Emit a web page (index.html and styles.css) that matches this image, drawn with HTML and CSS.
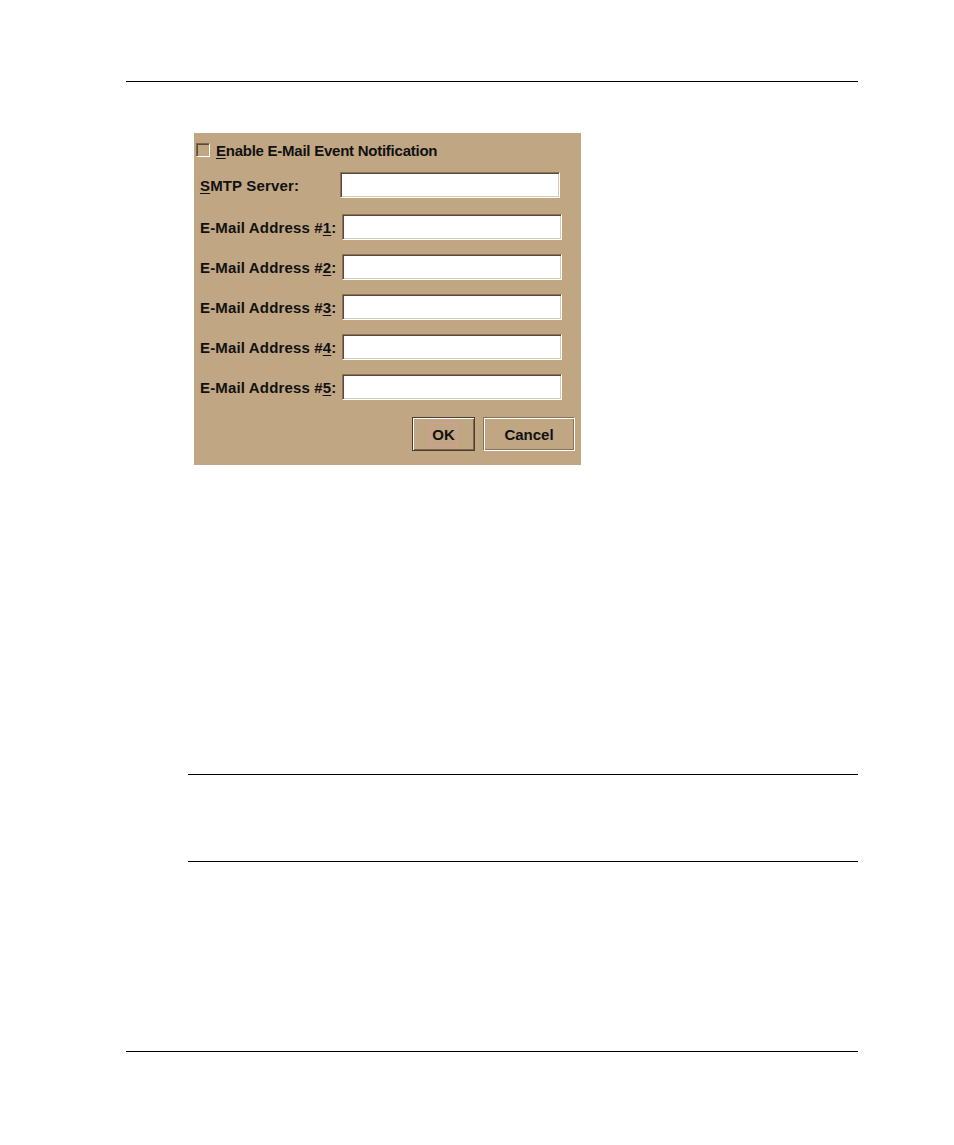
FILE: index.html
```html
<!DOCTYPE html>
<html>
<head>
<meta charset="utf-8">
<link rel="stylesheet" href="styles.css">
</head>
<body>
<div class="page">
  <div class="rule rule-top"></div>
  <div class="dialog">
    <div class="check-row">
      <span class="checkbox"></span>
      <span class="label label-check"><u>E</u>nable E-Mail Event Notification</span>
    </div>
    <div class="fields">
      <div class="row row-smtp">
        <span class="label"><u>S</u>MTP Server:</span>
        <span class="field field-smtp"></span>
      </div>
      <div class="row row-first">
        <span class="label">E-Mail Address #<u>1</u>:</span>
        <span class="field"></span>
      </div>
      <div class="row">
        <span class="label">E-Mail Address #<u>2</u>:</span>
        <span class="field"></span>
      </div>
      <div class="row">
        <span class="label">E-Mail Address #<u>3</u>:</span>
        <span class="field"></span>
      </div>
      <div class="row">
        <span class="label">E-Mail Address #<u>4</u>:</span>
        <span class="field"></span>
      </div>
      <div class="row">
        <span class="label">E-Mail Address #<u>5</u>:</span>
        <span class="field"></span>
      </div>
    </div>
    <div class="buttons">
      <button class="btn btn-ok"><span class="focus">OK</span></button>
      <button class="btn btn-cancel">Cancel</button>
    </div>
  </div>
  <div class="rule rule-mid rule-mid1"></div>
  <div class="rule rule-mid rule-mid2"></div>
  <div class="rule rule-bottom"></div>
</div>
</body>
</html>
```

FILE: styles.css
```css
html, body {
  margin: 0;
  padding: 0;
  background: #ffffff;
}

.page {
  width: 954px;
  height: 1145px;
  padding-top: 81px;
  box-sizing: border-box;
  font-family: "Liberation Sans", Arial, sans-serif;
}

.rule {
  border-top: 1px solid #000;
  height: 0;
}

.rule-top {
  margin-left: 126px;
  width: 732px;
}

.rule-mid {
  margin-left: 188px;
  width: 670px;
}

.rule-mid1 {
  margin-top: 309px;
}

.rule-mid2 {
  margin-top: 86px;
}

.rule-bottom {
  margin-left: 126px;
  width: 732px;
  margin-top: 189px;
}

.dialog {
  margin-top: 51px;
  margin-left: 194px;
  width: 387px;
  height: 332px;
  box-sizing: border-box;
  background: #c1a684;
  padding: 10px 0 0 0;
  display: flex;
  flex-direction: column;
}

.label {
  font-weight: bold;
  font-size: 15px;
  letter-spacing: 0.15px;
  color: #111;
  white-space: nowrap;
}

.label-check {
  letter-spacing: -0.25px;
}

.label u {
  text-decoration-thickness: 1px;
  text-underline-offset: 2px;
}

.check-row {
  display: flex;
  align-items: center;
  gap: 6px;
  padding-left: 2px;
  height: 14px;
}

.checkbox {
  width: 14px;
  height: 14px;
  box-sizing: border-box;
  border-top: 1px solid #7a6650;
  border-left: 1px solid #7a6650;
  border-right: 1px solid #ffffff;
  border-bottom: 1px solid #ffffff;
  box-shadow: inset 1px 1px 0 #5a4a38;
  background: #c1a684;
}

.fields {
  display: flex;
  flex-direction: column;
  margin-top: 15px;
  padding-left: 6px;
}

.row {
  display: flex;
  align-items: center;
  justify-content: space-between;
  width: 362px;
  height: 26px;
  margin-top: 14px;
}

.row-smtp {
  margin-top: 0;
  width: 360px;
}

.row-first {
  margin-top: 16px;
}

.field {
  width: 220px;
  height: 26px;
  box-sizing: border-box;
  background: #ffffff;
  border-top: 1px solid #8a7358;
  border-left: 1px solid #8a7358;
  border-right: 1px solid #ffffff;
  border-bottom: 1px solid #ffffff;
  box-shadow: inset 1px 1px 0 #5c4a36, inset -1px -1px 0 #d9cbb6;
}

.buttons {
  display: flex;
  justify-content: flex-end;
  gap: 8px;
  margin-top: 17px;
  padding-right: 6px;
}

.btn {
  height: 34px;
  box-sizing: border-box;
  margin: 0;
  padding: 0;
  background: #c1a684;
  font-family: "Liberation Sans", Arial, sans-serif;
  font-weight: bold;
  font-size: 15px;
  color: #111;
  display: flex;
  align-items: center;
  justify-content: center;
}

.btn-ok {
  width: 63px;
  border: 1px solid #4e3d2a;
  box-shadow: inset 1px 1px 0 #ffffff, inset -1px -1px 0 #7a6650, inset 2px 2px 0 #c1a684;
}

.btn-cancel {
  width: 92px;
  border-top: 1px solid #8a7358;
  border-left: 1px solid #8a7358;
  border-right: 1px solid #ffffff;
  border-bottom: 1px solid #ffffff;
  box-shadow: inset 1px 1px 0 #ffffff, inset -1px -1px 0 #8a7358;
}

.focus {
  display: inline-block;
  padding: 3px 1px;
  border: 1px solid #d99a9e;
  line-height: 15px;
}
```
